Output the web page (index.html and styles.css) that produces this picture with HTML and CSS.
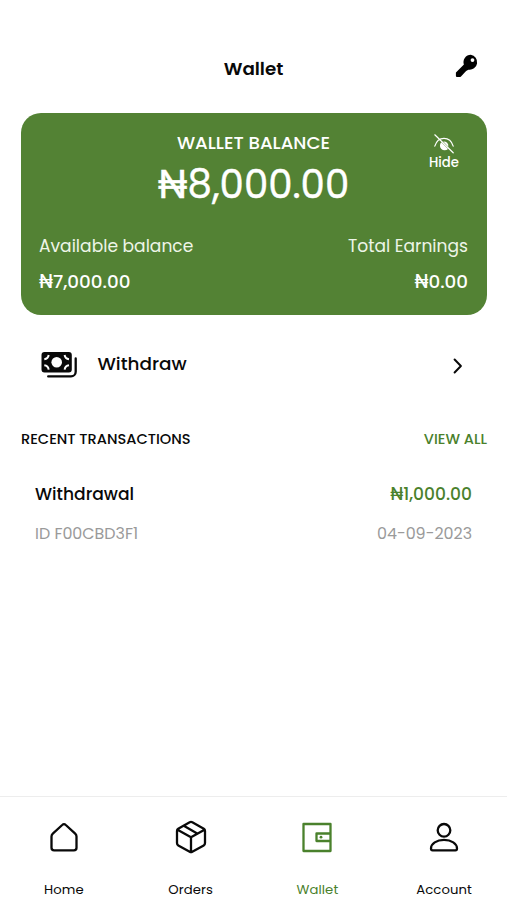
FILE: index.html
```html
<!DOCTYPE html>
<html lang="en">
<head>
<meta charset="utf-8">
<title>Wallet</title>
<link rel="stylesheet" href="styles.css">
</head>
<body>
<div class="screen">
  <header class="header">
    <h1 class="title">Wallet</h1>
    <svg class="key" viewBox="0 0 24 24"><path fill-rule="evenodd" d="M15.800.800a7.300 7.300 0 0 0-6.900 9.800L1.200 18.300a1 1 0 0 0-.3.800v2.700c0 .8.600 1.300 1.300 1.300h2.200c.7 0 1.200-.2 1.600-.7l5.100-5.300 2.300-1.400a7.300 7.300 0 1 0 2.400-14.900Zm1.700 3.400a1.900 1.900 0 1 1 0 3.800 1.900 1.900 0 0 1 0-3.800Z"/></svg>
  </header>
  <main class="content">
    <section class="card">
      <div class="balance">
        <h2 class="balance-label">WALLET BALANCE</h2>
        <p class="balance-amount">₦8,000.00</p>
        <button class="hide">
          <svg class="eye" viewBox="0 0 20 20" fill="none" stroke="currentColor" stroke-width="1.2" stroke-linecap="round"><path d="M.8 12.200C2.200 7.500 5.800 4.400 10 4.400s7.800 3.100 9.200 7.800"/><path d="M.8.800l18.400 18"/><path fill="currentColor" stroke="none" d="M7.300 8.300 14 14.900A4.500 4.500 0 1 1 7.300 8.300Z"/><path fill="currentColor" stroke="none" d="M9.300 7.500a4.500 4.500 0 0 1 5 5.200Z"/></svg>
          <span>Hide</span>
        </button>
      </div>
      <div class="stats">
        <div class="stat"><span class="stat-label">Available balance</span><span class="stat-value">₦7,000.00</span></div>
        <div class="stat stat-end"><span class="stat-label">Total Earnings</span><span class="stat-value">₦0.00</span></div>
      </div>
    </section>
    <a class="withdraw">
      <svg class="cash" viewBox="0 0 36 26"><path d="M3.500 0h24.300a3 3 0 0 1 3 3v14.600a3 3 0 0 1-3 3H3.500a3 3 0 0 1-3-3V3a3 3 0 0 1 3-3Z"/><circle class="coin" cx="15.700" cy="10.300" r="5.300"/><path class="notch" d="M3.300 7.300q3.700-.5 4.400-4.300M28 7.300q-3.700-.5-4.400-4.300M3.300 13.300q3.700.5 4.400 4.300M28 13.300q-3.700.5-4.400 4.300"/><path class="stack" d="M34.700 6.500v13.200a4.700 4.700 0 0 1-4.700 4.700H7.200"/></svg>
      <span class="withdraw-label">Withdraw</span>
      <svg class="chevron" viewBox="0 0 10 16"><path d="m1.600 1.500 6.300 6.500-6.300 6.500"/></svg>
    </a>
    <div class="section-head"><h3 class="recent">RECENT TRANSACTIONS</h3><a class="view-all">VIEW ALL</a></div>
    <article class="transaction">
      <div class="row main-row"><span>Withdrawal</span><span class="sum">₦1,000.00</span></div>
      <div class="row meta-row"><span>ID F00CBD3F1</span><span>04-09-2023</span></div>
    </article>
  </main>
  <nav class="tabs">
    <a class="tab"><svg class="tab-icon" viewBox="0 0 36 36"><path d="M5.500 17.600c0-1.200.4-2.200 1.300-3L16.200 6a2.600 2.600 0 0 1 3.600 0l9.400 8.600c.9.800 1.300 1.800 1.300 3v11.200a2.600 2.600 0 0 1-2.600 2.600H8.100a2.600 2.600 0 0 1-2.600-2.600Z"/></svg><span>Home</span></a>
    <a class="tab"><svg class="tab-icon" viewBox="0 0 36 36"><path d="M16.700 3.200a2.600 2.600 0 0 1 2.600 0l11.500 6.500a2.600 2.600 0 0 1 1.200 2.200v12.200a2.600 2.600 0 0 1-1.300 2.300l-11.400 6.400a2.600 2.600 0 0 1-2.600 0l-11.400-6.400A2.600 2.600 0 0 1 4 24.100V11.900a2.600 2.600 0 0 1 1.200-2.200ZM4.500 10.700 18 18.200l13.500-7.500M18 18.200V33M10.800 6.800l13.400 7.700"/></svg><span>Orders</span></a>
    <a class="tab active"><svg class="tab-icon" viewBox="0 0 36 36"><path d="M4.500 5h27v27h-27ZM31.500 14.500h-14v7.500h14"/><circle class="clasp" cx="22" cy="18.200" r="1.400"/></svg><span>Wallet</span></a>
    <a class="tab"><svg class="tab-icon" viewBox="0 0 36 36"><circle cx="18" cy="11.300" r="6.300"/><path d="M5 29.500C5 24.700 10.600 20.900 18 20.900s13 3.800 13 8.600c0 1.300-.5 1.900-1.600 1.900H6.600c-1.100 0-1.600-.6-1.600-1.900Z"/></svg><span>Account</span></a>
  </nav>
</div>
</body>
</html>
```
FILE: styles.css
```css
* { box-sizing: border-box; margin: 0; padding: 0; }
body { background: #fff; color: #090909; font-family: Poppins, Inter, sans-serif; }
.screen { width: 507px; height: 900px; display: flex; flex-direction: column; }
.header { height: 113px; padding: 25px 28px 0; display: grid; grid-template-columns: 24px 1fr 24px; align-items: center; flex: none; }
.title { grid-column: 2; font-size: 18.300px; line-height: 24px; font-weight: 600; text-align: center; }
.key { width: 24px; height: 24px; margin-top: -6px; }
.content { flex: 1; padding: 0 20px 0 21px; min-height: 0; }
.card { height: 202px; margin: 0 0 0 -.5px; padding: 18px 19px 0 18.500px; border-radius: 20px; background: #538234; color: #fff; }
.balance { position: relative; height: 103px; text-align: center; }
.balance-label { font-size: 18.200px; line-height: 24px; font-weight: 500; }
.balance-amount { font-size: 38.700px; line-height: 59px; font-weight: 400; -webkit-text-stroke: .4px #fff; }
.hide { position: absolute; top: 3px; right: 6px; width: 36px; border: 0; background: none; color: #fff; font: 500 13.200px/18px Poppins, Inter, sans-serif; display: flex; flex-direction: column; align-items: center; }
.eye { width: 20px; height: 20px; }
.stats { display: flex; justify-content: space-between; }
.stat { display: flex; flex-direction: column; align-items: flex-start; gap: 12px; line-height: 24px; }
.stat-end { align-items: flex-end; }
.stat-label { font-size: 17.100px; color: #eef5e8; }
.stat-value { font-size: 18.300px; font-weight: 500; }
.withdraw { display: flex; align-items: center; height: 98px; padding: 0 24px 0 20px; }
.cash { width: 36px; height: 26px; margin: 1px 20.500px 0 0; overflow: visible; fill: #090909; }
.cash .coin { fill: #fff; }
.cash .notch { fill: none; stroke: #fff; stroke-width: 2; }
.cash .stack { fill: none; stroke: #090909; stroke-width: 2.300; stroke-linecap: round; }
.withdraw-label { flex: 1; font-size: 18.400px; line-height: 24px; font-weight: 500; }
.chevron { width: 10px; height: 16px; fill: none; stroke: #090909; stroke-width: 2; stroke-linecap: round; stroke-linejoin: round; margin-top: 3px; }
.section-head { display: flex; justify-content: space-between; line-height: 24px; margin-top: 14px; font-size: 14.600px; font-weight: 500; }
.recent { font-size: inherit; font-weight: inherit; }
.view-all, .sum { color: #4a812c; }
.transaction { padding: 31px 15px 0 14px; }
.row { display: flex; justify-content: space-between; line-height: 24px; }
.main-row { font-size: 17.100px; font-weight: 500; }
.meta-row { margin-top: 16px; font-size: 15.900px; color: #9a9a9a; }
.tabs { height: 104px; flex: none; display: grid; grid-template-columns: repeat(4, 1fr); border-top: 1px solid #ededed; }
.tab { display: flex; flex-direction: column; align-items: center; padding: 22px 0 0 1px; font-size: 13.200px; letter-spacing: .1px; line-height: 20px; }
.tab-icon { width: 36px; height: 36px; margin-bottom: 25px; fill: none; stroke: currentColor; stroke-width: 2.300; stroke-linejoin: round; }
.clasp { fill: currentColor; stroke: none; }
.active { color: #4a812c; }
```
